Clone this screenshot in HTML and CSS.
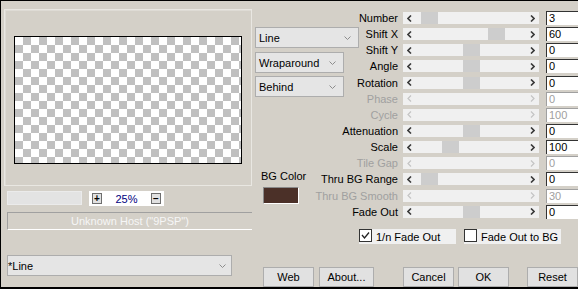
FILE: index.html
```html
<!DOCTYPE html>
<html>
<head>
<meta charset="utf-8">
<link rel="stylesheet" href="styles.css">
</head>
<body>
<div class="dlg">
  <div class="left">
    <div class="group"><div class="checker"></div></div>
    <div class="zoomrow">
      <div class="zfield"></div>
      <div class="zbox"><span class="zbtn">+</span><span class="zval">25%</span><span class="zbtn minus">&minus;</span></div>
    </div>
    <div class="host">Unknown Host ("9PSP")</div>
    <div class="combo wide"><span>*Line</span><svg class="chev" width="7" height="4" viewBox="0 0 7 4"><polyline points="0.5,0.5 3.5,3.5 6.5,0.5" fill="none" stroke="#8c8c8c" stroke-width="1"/></svg></div>
  </div>
  <div class="right">
    <div class="top">
      <div class="mid">
        <div class="combo c1"><span>Line</span><svg class="chev" width="7" height="4" viewBox="0 0 7 4"><polyline points="0.5,0.5 3.5,3.5 6.5,0.5" fill="none" stroke="#8c8c8c" stroke-width="1"/></svg></div>
        <div class="combo c2"><span>Wraparound</span><svg class="chev" width="7" height="4" viewBox="0 0 7 4"><polyline points="0.5,0.5 3.5,3.5 6.5,0.5" fill="none" stroke="#8c8c8c" stroke-width="1"/></svg></div>
        <div class="combo c3"><span>Behind</span><svg class="chev" width="7" height="4" viewBox="0 0 7 4"><polyline points="0.5,0.5 3.5,3.5 6.5,0.5" fill="none" stroke="#8c8c8c" stroke-width="1"/></svg></div>
        <div class="bglabel">BG Color</div>
        <div class="swatch"></div>
      </div>
      <div class="sliders">
        <div class="row"><div class="lbl">Number</div><div class="track"><span class="arr l"><svg width="5" height="7" viewBox="0 0 5 7"><polyline points="4,0.5 1,3.5 4,6.5" fill="none" stroke="currentColor" stroke-width="1.6"/></svg></span><span class="rail"><span class="thumb" style="--x:0px"></span></span><span class="arr r"><svg width="5" height="7" viewBox="0 0 5 7"><polyline points="1,0.5 4,3.5 1,6.5" fill="none" stroke="currentColor" stroke-width="1.6"/></svg></span></div><div class="val">3</div></div>
        <div class="row"><div class="lbl">Shift X</div><div class="track"><span class="arr l"><svg width="5" height="7" viewBox="0 0 5 7"><polyline points="4,0.5 1,3.5 4,6.5" fill="none" stroke="currentColor" stroke-width="1.6"/></svg></span><span class="rail"><span class="thumb" style="--x:67px"></span></span><span class="arr r"><svg width="5" height="7" viewBox="0 0 5 7"><polyline points="1,0.5 4,3.5 1,6.5" fill="none" stroke="currentColor" stroke-width="1.6"/></svg></span></div><div class="val">60</div></div>
        <div class="row"><div class="lbl">Shift Y</div><div class="track"><span class="arr l"><svg width="5" height="7" viewBox="0 0 5 7"><polyline points="4,0.5 1,3.5 4,6.5" fill="none" stroke="currentColor" stroke-width="1.6"/></svg></span><span class="rail"><span class="thumb" style="--x:42px"></span></span><span class="arr r"><svg width="5" height="7" viewBox="0 0 5 7"><polyline points="1,0.5 4,3.5 1,6.5" fill="none" stroke="currentColor" stroke-width="1.6"/></svg></span></div><div class="val">0</div></div>
        <div class="row"><div class="lbl">Angle</div><div class="track"><span class="arr l"><svg width="5" height="7" viewBox="0 0 5 7"><polyline points="4,0.5 1,3.5 4,6.5" fill="none" stroke="currentColor" stroke-width="1.6"/></svg></span><span class="rail"><span class="thumb" style="--x:42px"></span></span><span class="arr r"><svg width="5" height="7" viewBox="0 0 5 7"><polyline points="1,0.5 4,3.5 1,6.5" fill="none" stroke="currentColor" stroke-width="1.6"/></svg></span></div><div class="val">0</div></div>
        <div class="row"><div class="lbl">Rotation</div><div class="track"><span class="arr l"><svg width="5" height="7" viewBox="0 0 5 7"><polyline points="4,0.5 1,3.5 4,6.5" fill="none" stroke="currentColor" stroke-width="1.6"/></svg></span><span class="rail"><span class="thumb" style="--x:42px"></span></span><span class="arr r"><svg width="5" height="7" viewBox="0 0 5 7"><polyline points="1,0.5 4,3.5 1,6.5" fill="none" stroke="currentColor" stroke-width="1.6"/></svg></span></div><div class="val">0</div></div>
        <div class="row off"><div class="lbl">Phase</div><div class="track"><span class="arr l"><svg width="5" height="7" viewBox="0 0 5 7"><polyline points="4,0.5 1,3.5 4,6.5" fill="none" stroke="currentColor" stroke-width="1.2"/></svg></span><span class="rail"></span><span class="arr r"><svg width="5" height="7" viewBox="0 0 5 7"><polyline points="1,0.5 4,3.5 1,6.5" fill="none" stroke="currentColor" stroke-width="1.2"/></svg></span></div><div class="val">0</div></div>
        <div class="row off"><div class="lbl">Cycle</div><div class="track"><span class="arr l"><svg width="5" height="7" viewBox="0 0 5 7"><polyline points="4,0.5 1,3.5 4,6.5" fill="none" stroke="currentColor" stroke-width="1.2"/></svg></span><span class="rail"></span><span class="arr r"><svg width="5" height="7" viewBox="0 0 5 7"><polyline points="1,0.5 4,3.5 1,6.5" fill="none" stroke="currentColor" stroke-width="1.2"/></svg></span></div><div class="val">100</div></div>
        <div class="row"><div class="lbl">Attenuation</div><div class="track"><span class="arr l"><svg width="5" height="7" viewBox="0 0 5 7"><polyline points="4,0.5 1,3.5 4,6.5" fill="none" stroke="currentColor" stroke-width="1.6"/></svg></span><span class="rail"><span class="thumb" style="--x:42px"></span></span><span class="arr r"><svg width="5" height="7" viewBox="0 0 5 7"><polyline points="1,0.5 4,3.5 1,6.5" fill="none" stroke="currentColor" stroke-width="1.6"/></svg></span></div><div class="val">0</div></div>
        <div class="row"><div class="lbl">Scale</div><div class="track"><span class="arr l"><svg width="5" height="7" viewBox="0 0 5 7"><polyline points="4,0.5 1,3.5 4,6.5" fill="none" stroke="currentColor" stroke-width="1.6"/></svg></span><span class="rail"><span class="thumb" style="--x:21px"></span></span><span class="arr r"><svg width="5" height="7" viewBox="0 0 5 7"><polyline points="1,0.5 4,3.5 1,6.5" fill="none" stroke="currentColor" stroke-width="1.6"/></svg></span></div><div class="val">100</div></div>
        <div class="row off"><div class="lbl">Tile Gap</div><div class="track"><span class="arr l"><svg width="5" height="7" viewBox="0 0 5 7"><polyline points="4,0.5 1,3.5 4,6.5" fill="none" stroke="currentColor" stroke-width="1.2"/></svg></span><span class="rail"></span><span class="arr r"><svg width="5" height="7" viewBox="0 0 5 7"><polyline points="1,0.5 4,3.5 1,6.5" fill="none" stroke="currentColor" stroke-width="1.2"/></svg></span></div><div class="val">0</div></div>
        <div class="row"><div class="lbl">Thru BG Range</div><div class="track"><span class="arr l"><svg width="5" height="7" viewBox="0 0 5 7"><polyline points="4,0.5 1,3.5 4,6.5" fill="none" stroke="currentColor" stroke-width="1.6"/></svg></span><span class="rail"><span class="thumb" style="--x:0px"></span></span><span class="arr r"><svg width="5" height="7" viewBox="0 0 5 7"><polyline points="1,0.5 4,3.5 1,6.5" fill="none" stroke="currentColor" stroke-width="1.6"/></svg></span></div><div class="val">0</div></div>
        <div class="row off"><div class="lbl">Thru BG Smooth</div><div class="track"><span class="arr l"><svg width="5" height="7" viewBox="0 0 5 7"><polyline points="4,0.5 1,3.5 4,6.5" fill="none" stroke="currentColor" stroke-width="1.2"/></svg></span><span class="rail"></span><span class="arr r"><svg width="5" height="7" viewBox="0 0 5 7"><polyline points="1,0.5 4,3.5 1,6.5" fill="none" stroke="currentColor" stroke-width="1.2"/></svg></span></div><div class="val">30</div></div>
        <div class="row"><div class="lbl">Fade Out</div><div class="track"><span class="arr l"><svg width="5" height="7" viewBox="0 0 5 7"><polyline points="4,0.5 1,3.5 4,6.5" fill="none" stroke="currentColor" stroke-width="1.6"/></svg></span><span class="rail"><span class="thumb" style="--x:42px"></span></span><span class="arr r"><svg width="5" height="7" viewBox="0 0 5 7"><polyline points="1,0.5 4,3.5 1,6.5" fill="none" stroke="currentColor" stroke-width="1.6"/></svg></span></div><div class="val">0</div></div>
      </div>
    </div>
    <div class="checks">
      <div class="chk"><span class="box"><svg width="11" height="11" viewBox="0 0 11 11"><polyline points="2,5 4.5,8 9,2.5" fill="none" stroke="#222" stroke-width="1.3"/></svg></span><span>1/n Fade Out</span></div>
      <div class="chk"><span class="box"></span><span>Fade Out to BG</span></div>
    </div>
    <div class="buttons">
      <div class="btn web">Web</div>
      <div class="btn about">About...</div>
      <div class="btn cancel">Cancel</div>
      <div class="btn ok">OK</div>
      <div class="btn reset">Reset</div>
    </div>
  </div>
</div>
</body>
</html>
```
FILE: styles.css
```css
* { box-sizing: border-box; }
html, body { margin: 0; padding: 0; }
body {
  background: #d4d0c8;
  font-family: "Liberation Sans", Arial, sans-serif;
  font-size: 11px;
  color: #000;
}
.dlg {
  width: 578px;
  height: 289px;
  border-top: 1px solid #000;
  border-left: 1px solid #000;
  border-bottom: 2px solid #000;
  display: flex;
  background: #d4d0c8;
  overflow: hidden;
}
.left {
  width: 253px;
  flex: none;
  padding-left: 3px;
  display: flex;
  flex-direction: column;
  align-items: flex-start;
}
.group {
  margin-top: 8px;
  width: 248px;
  height: 177px;
  border: 1px solid #e9e7e2;
  box-shadow: inset 1px 1px 0 #dedbd5;
}
.checker {
  margin: 26px 0 0 9px;
  width: 228px;
  height: 128px;
  border: 1px solid #000;
  background: conic-gradient(#c0c0c0 0 25%, #fff 0 50%, #c0c0c0 0 75%, #fff 0) 0 0 / 16px 16px;
}
.zoomrow {
  margin: 5px 0 0 3px;
  display: flex;
  gap: 7px;
  height: 15px;
}
.zfield {
  width: 75px;
  height: 14px;
  background: #e3e3e3;
  border: 1px solid #ebebeb;
}
.zbox {
  width: 75px;
  height: 15px;
  background: #fff;
  display: flex;
  align-items: center;
  justify-content: space-between;
  padding: 0 3px;
}
.zbtn {
  width: 10px;
  height: 11px;
  background: #e1e1e1;
  border: 1px solid #6e6e6e;
  font-weight: bold;
  font-size: 10px;
  line-height: 9px;
  text-align: center;
}
.zval { color: #000080; font-size: 11px; }
.host {
  margin: 6px 0 0 3px;
  width: 245px;
  height: 18px;
  border-top: 1px solid #a0a0a0;
  border-left: 1px solid #a0a0a0;
  border-bottom: 1px solid #fff;
  color: #f6f6f6;
  text-align: center;
  line-height: 16px;
  white-space: nowrap;
}
.combo {
  height: 21px;
  background: #e5e5e5;
  border: 1px solid #adadad;
  display: flex;
  align-items: center;
  justify-content: space-between;
  padding: 0 7px 0 3px;
  white-space: nowrap;
}
.chev { display: block; }
.combo.wide {
  margin: 25px 0 0 3px;
  width: 225px;
  padding: 0 5px 0 0;
}
.right {
  width: 324px;
  flex: none;
  display: flex;
  flex-direction: column;
}
.top {
  display: flex;
  height: 219px;
}
.mid {
  width: 86px;
  flex: none;
  padding-left: 1px;
  display: flex;
  flex-direction: column;
  align-items: flex-start;
}
.c1 { margin-top: 26px; width: 104px; flex: none; }
.c2 { margin-top: 4px; width: 89px; flex: none; }
.c3 { margin-top: 3px; width: 89px; flex: none; }
.bglabel {
  margin: 73px 0 0 6px;
  line-height: 13px;
  white-space: nowrap;
}
.swatch {
  margin: 4px 0 0 8px;
  width: 36px;
  height: 17px;
  background: #4b3028;
  border: 1px solid;
  border-color: #8a8a8a #fff #fff #8a8a8a;
}
.sliders {
  width: 238px;
  flex: none;
  padding-top: 9px;
}
.row {
  display: flex;
  height: 16.15px;
}
.lbl {
  width: 58px;
  flex: none;
  height: 16px;
  display: flex;
  justify-content: flex-end;
  align-items: center;
  white-space: nowrap;
}
.track {
  margin: 2px 0 0 5px;
  width: 136px;
  height: 12px;
  flex: none;
  background: #f0f0f0;
  display: flex;
  align-items: center;
  color: #3a3a3a;
}
.arr { display: flex; align-items: center; height: 12px; }
.arr svg { display: block; }
.arr.l { width: 18px; padding-left: 4px; }
.arr.r { width: 17px; padding-left: 8px; }
.rail { flex: 1; height: 12px; display: flex; }
.thumb {
  width: 17px;
  height: 12px;
  background: #cdcdcd;
  margin-left: var(--x);
}
.val {
  margin: 1px 0 0 7px;
  width: 32px;
  height: 14px;
  flex: none;
  background: #fff;
  border-top: 1px solid #333;
  border-left: 1px solid #333;
  padding-left: 2px;
  line-height: 13px;
}
.row.off .lbl { color: #a0a0a0; }
.row.off .track { color: #c4c4c4; }
.row.off .val { color: #a0a0a0; border-color: #a0a0a0; }
.checks {
  margin-top: 9px;
  padding-left: 105px;
  display: flex;
  gap: 8px;
  height: 15px;
}
.chk {
  width: 97px;
  height: 15px;
  background: #f0f0f0;
  display: flex;
  align-items: center;
  gap: 4px;
  white-space: nowrap;
}
.box {
  width: 13px;
  height: 13px;
  align-self: flex-start;
  border: 1px solid #333;
  background: #fff;
  display: flex;
  align-items: center;
  justify-content: center;
}
.box svg { display: block; }
.buttons {
  margin-top: 23px;
  display: flex;
  height: 20px;
  padding-left: 9px;
}
.btn {
  width: 51px;
  height: 20px;
  background: #e1e1e1;
  border: 1px solid #adadad;
  display: flex;
  align-items: center;
  justify-content: center;
  white-space: nowrap;
}
.btn.about { width: 55px; margin-left: 5px; }
.btn.cancel { margin-left: 29px; }
.btn.ok { margin-left: 4px; }
.btn.reset { margin-left: 18px; }
```
